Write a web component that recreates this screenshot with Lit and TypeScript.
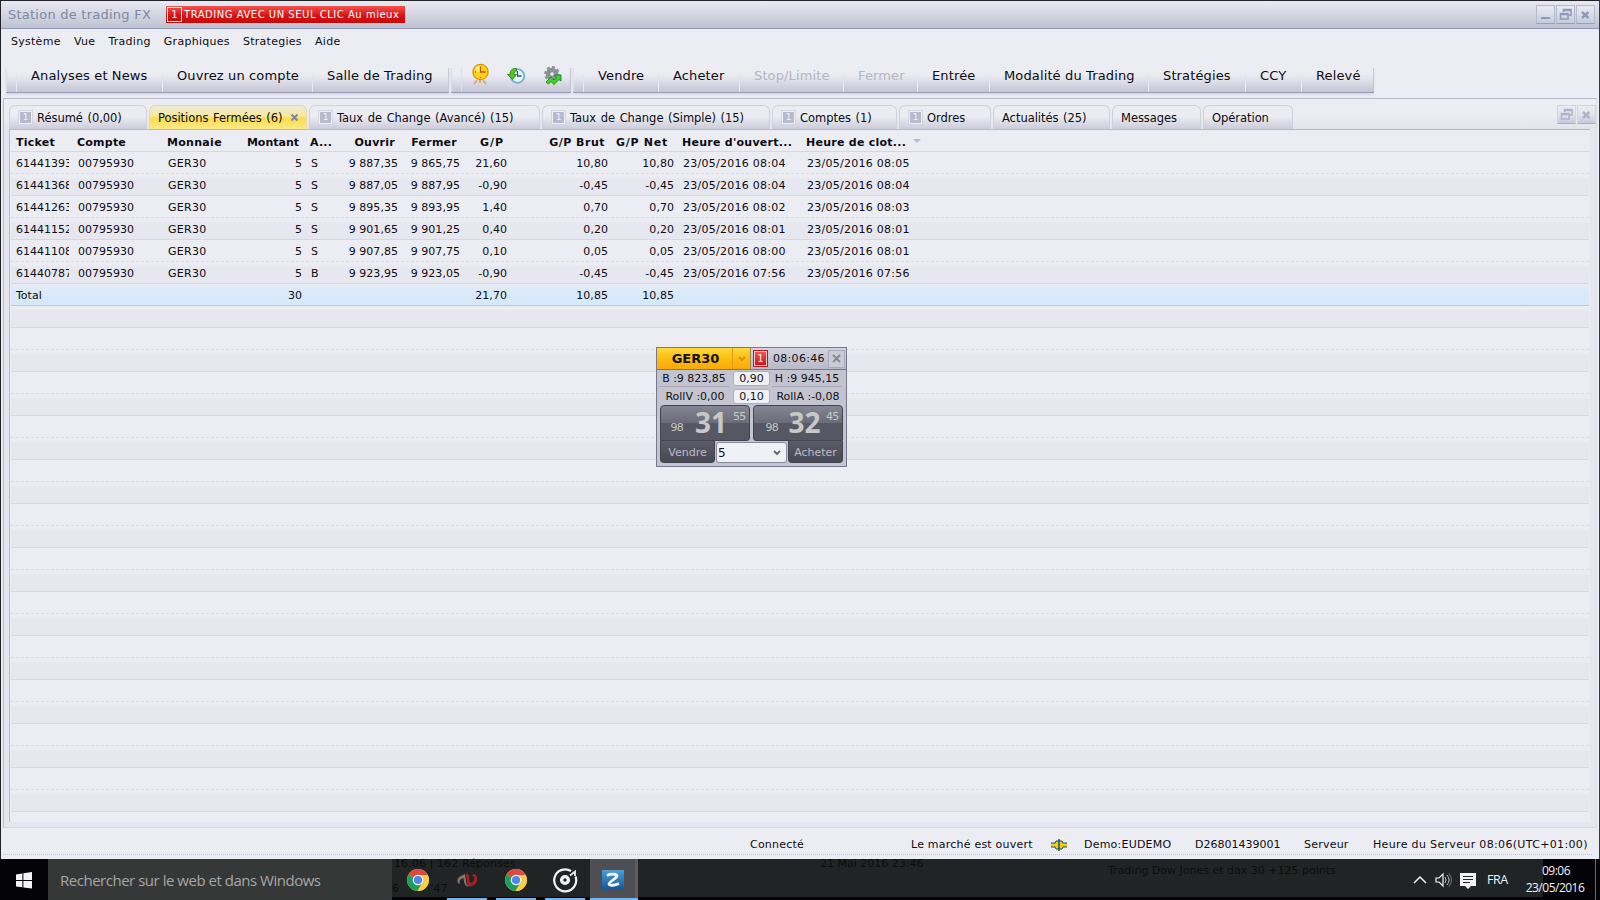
import { LitElement, html, css, svg } from "lit";
import { customElement, property } from "lit/decorators.js";
import { classMap } from "lit/directives/class-map.js";

interface Tab { label: string; width: number; badge?: boolean; active?: boolean; }
interface Tool { label: string; width: number; off?: boolean; }

const MENUS = ["Système", "Vue", "Trading", "Graphiques", "Strategies", "Aide"];

const LINKS: Tool[] = [
  { label: "Analyses et News", width: 146 },
  { label: "Ouvrez un compte", width: 150 },
  { label: "Salle de Trading", width: 137 },
];

const ACTIONS: Tool[] = [
  { label: "Vendre", width: 75 },
  { label: "Acheter", width: 81 },
  { label: "Stop/Limite", width: 104, off: true },
  { label: "Fermer", width: 74, off: true },
  { label: "Entrée", width: 72 },
  { label: "Modalité du Trading", width: 159 },
  { label: "Stratégies", width: 97 },
  { label: "CCY", width: 56 },
  { label: "Relevé", width: 73 },
];

const TABS: Tab[] = [
  { label: "Résumé (0,00)", width: 138, badge: true },
  { label: "Positions Fermées (6)", width: 158, active: true },
  { label: "Taux de Change (Avancé) (15)", width: 231, badge: true },
  { label: "Taux de Change (Simple) (15)", width: 228, badge: true },
  { label: "Comptes (1)", width: 125, badge: true },
  { label: "Ordres", width: 92, badge: true },
  { label: "Actualités (25)", width: 117 },
  { label: "Messages", width: 89 },
  { label: "Opération", width: 90 },
];

const HEAD = ["Ticket", "Compte", "Monnaie", "Montant", "A...", "Ouvrir", "Fermer", "G/P", "G/P Brut", "G/P Net", "Heure d'ouvert...", "Heure de clot..."];
const RIGHT = [3, 5, 6, 7, 8, 9];

const ROWS: string[][] = [
  ["61441393", "00795930", "GER30", "5", "S", "9 887,35", "9 865,75", "21,60", "10,80", "10,80", "23/05/2016 08:04", "23/05/2016 08:05"],
  ["61441368", "00795930", "GER30", "5", "S", "9 887,05", "9 887,95", "-0,90", "-0,45", "-0,45", "23/05/2016 08:04", "23/05/2016 08:04"],
  ["61441263", "00795930", "GER30", "5", "S", "9 895,35", "9 893,95", "1,40", "0,70", "0,70", "23/05/2016 08:02", "23/05/2016 08:03"],
  ["61441152", "00795930", "GER30", "5", "S", "9 901,65", "9 901,25", "0,40", "0,20", "0,20", "23/05/2016 08:01", "23/05/2016 08:01"],
  ["61441108", "00795930", "GER30", "5", "S", "9 907,85", "9 907,75", "0,10", "0,05", "0,05", "23/05/2016 08:00", "23/05/2016 08:01"],
  ["61440787", "00795930", "GER30", "5", "B", "9 923,95", "9 923,05", "-0,90", "-0,45", "-0,45", "23/05/2016 07:56", "23/05/2016 07:56"],
  ["Total", "", "", "30", "", "", "", "21,70", "10,85", "10,85", "", ""],
];
const TOTAL_INDEX = 6;
const ROW_COUNT = 30;

const restoreGlyph = svg`<path d="M7.5 7V4.5H15V10H12.5M7.5 5.5H15" fill="none" stroke="currentColor" stroke-width="1.6"/><path d="M4.5 8.5H12V14H4.5ZM4.5 9.5H12" fill="none" stroke="currentColor" stroke-width="1.6"/>`;
const closeGlyph = svg`<path d="M6 7L12.5 13M12.5 7L6 13" stroke="currentColor" stroke-width="2.4" fill="none"/>`;
const minGlyph = svg`<path d="M5 13H14" stroke="currentColor" stroke-width="2" fill="none"/>`;

@customElement("frame-button")
class FrameButton extends LitElement {
  @property() kind = "close";
  static styles = css`
    :host { display: block; box-sizing: border-box; width: 19px; height: 19px; border: 1px solid #b4bacf; border-bottom-color: #969fc3; color: #8e9bb8;
      background: linear-gradient(#e8e9f1, #dcdee9 45%, #c3cbdd); }
    :host([pale]) { border-color: #d4d5e0; border-bottom-color: #a9adc8; color: #b0b2ca; background: linear-gradient(#ecedf3, #e2e3ec 50%, #c6cadb); }
    svg { display: block; margin: -1px; }
  `;
  render() {
    const glyph = this.kind === "min" ? minGlyph : this.kind === "restore" ? restoreGlyph : closeGlyph;
    return html`<svg width="19" height="19" viewBox="0 0 19 19">${glyph}</svg>`;
  }
}

@customElement("quote-widget")
class QuoteWidget extends LitElement {
  static styles = css`
    :host { display: flex; flex-direction: column; box-sizing: border-box; width: 191px; height: 120px; border: 1px solid #77788c; background: #c3c4d0;
      font: 11px/16px "DejaVu Sans", sans-serif; color: #111; }
    .head { display: flex; height: 22px; box-sizing: border-box; border-bottom: 1px solid #77788c; background: linear-gradient(#d2d3df, #b9bac9); line-height: 22px; }
    .name { width: 76px; font-weight: bold; font-size: 13px; padding-left: 2px; text-align: center; background: linear-gradient(#ffd93a, #fdbd11 50%, #f9a90b); border-right: 1px solid #e09a10; box-sizing: border-box; height: 21px; }
    .drop { width: 18px; background: linear-gradient(#ffd93a, #fdbd11 50%, #f9a90b); height: 21px; border-right: 1px solid #a08a50; box-sizing: border-box; }
    .one { box-sizing: border-box; width: 15px; height: 17px; margin: 2px 0 0 2px; border: 1px solid #c51515; box-shadow: inset 0 0 0 1px #f5c9c9; background: linear-gradient(#f25c55, #cd0d12); color: #fff; line-height: 15px; text-align: center; font-size: 10px; }
    .time { margin-left: 5px; width: 55px; letter-spacing: .3px; }
    .x { box-sizing: border-box; width: 17px; height: 18px; margin-top: 2px; border: 1px solid #a9abbd; background: #cacbd7; }
    svg { display: block; }
    .line { display: grid; grid-template-columns: 76px 37px 1fr; height: 17px; padding-top: 1px; box-sizing: border-box; }
    .line + .line { height: 18px; padding-top: 2px; }
    .line span { text-align: center; line-height: 16px; }
    .line b { font-weight: normal; text-align: center; background: #f0f1f6; border-radius: 3px; height: 15px; line-height: 14px; border: 1px solid #aeb0c0; box-sizing: border-box; }
    .cell { border-bottom: 1px solid #a7a8b8; margin: 0 4px 0 2px; height: 16px; box-sizing: border-box; white-space: nowrap; }
    .prices { display: grid; grid-template-columns: 90px 90px; gap: 3px; padding: 0 3px; }
    .price { height: 36px; box-sizing: border-box; border: 1px solid #444552; border-radius: 4px 4px 3px 0; color: #c8c8c4; display: grid; grid-template-columns: 22px 1fr 16px;
      background: linear-gradient(#858694, #6b6c79 49%, #575865 50%, #565763); }
    .price + .price { border-radius: 4px 4px 0 3px; grid-template-columns: 24px 1fr 16px; }
    .sm { font-size: 11px; line-height: 44px; text-align: right; letter-spacing: -.8px; }
    .big { font: bold 28px/33px "Noto Sans", sans-serif; text-align: center; padding-left: 6px; }
    .price + .price .big { padding-left: 5px; }
    .sup { font-size: 11px; line-height: 21px; letter-spacing: -.8px; }
    .foot { display: flex; padding: 0 3px; }
    .side { width: 55px; height: 22px; box-sizing: border-box; background: linear-gradient(#5a5b67, #474854); border: 1px solid #444552; border-top: 0; border-radius: 0 0 4px 4px; color: #b9bac6; text-align: center; line-height: 23px; }
    .amount { flex: 1; display: flex; justify-content: space-between; box-sizing: border-box; margin: 1px 1px 0; height: 21px; background: #f0f1f6; border: 1px solid #888a9c; border-radius: 3px; font-size: 12px; line-height: 20px; padding: 0 2px 0 1px; }
  `;
  render() {
    return html`
      <div class="head">
        <div class="name">GER30</div>
        <div class="drop"><svg width="17" height="20"><path d="M6 9l3 3 3-3" fill="none" stroke="#df8a12" stroke-width="1.8"/></svg></div>
        <div class="one">1</div><div class="time">08:06:46</div>
        <div class="x"><svg width="15" height="16"><path d="M4 4l7 7M11 4l-7 7" stroke="#85879a" stroke-width="1.8"/></svg></div>
      </div>
      <div class="line"><span class="cell">B :9 823,85</span><b>0,90</b><span class="cell">H :9 945,15</span></div>
      <div class="line"><span>RollV :0,00</span><b>0,10</b><span>RollA :-0,08</span></div>
      <div class="prices">
        <div class="price"><span class="sm">98</span><span class="big">31</span><span class="sup">55</span></div>
        <div class="price"><span class="sm">98</span><span class="big">32</span><span class="sup">45</span></div>
      </div>
      <div class="foot">
        <div class="side">Vendre</div>
        <div class="amount">5<svg width="14" height="18"><path d="M4 8l3 3 3-3" fill="none" stroke="#62647a" stroke-width="1.8"/></svg></div>
        <div class="side">Acheter</div>
      </div>`;
  }
}

@customElement("app-root")
class AppRoot extends LitElement {
  static styles = css`
    :host { display: flex; flex-direction: column; position: relative; width: 1600px; height: 900px; overflow: hidden; background: #ecedf3; color: #0c0c12;
      font: 11px/16px "DejaVu Sans", sans-serif; white-space: nowrap; }
    svg { display: block; }
    .window { box-sizing: border-box; height: 859px; flex: none; border: 1px solid #232228; border-bottom: 0; border-right-color: #3a3944; display: flex; flex-direction: column; }
    .title { box-sizing: border-box; height: 28px; border-bottom: 1px solid #9297b8; background: linear-gradient(#e9e9f2, #d6d8e3 45%, #bfc2d4); display: flex; align-items: center; padding: 0 4px 0 7px; }
    .caption { font-size: 13px; color: #7d89a6; width: 158px; letter-spacing: .24px; }
    .alert { display: flex; align-items: center; width: 239px; height: 17px; background: linear-gradient(#f4524c, #d91514 55%, #c80808); color: #fff; font-size: 10px; letter-spacing: .52px; }
    .alert i { box-sizing: border-box; width: 15px; height: 15px; border: 1px solid #fff; font-style: normal; text-align: center; line-height: 14px; margin: 0 2px 0 1px; letter-spacing: 0; }
    .frames { margin-left: auto; display: flex; gap: 1px; }
    .menu { display: flex; gap: 13.2px; padding: 5px 0 0 10px; height: 39px; box-sizing: border-box; letter-spacing: .27px; }
    .tools { display: flex; gap: 2px; padding-left: 5px; height: 27px; }
    .group { display: flex; height: 24px; border-bottom: 1.5px solid #9a98b8; box-shadow: 0 2px 2px #dadae6; background: linear-gradient(#ecedf3 25%, #dddee8 55%, #c5c6d5); }
    .group:first-child, .group:last-child { box-shadow: 0 2px 2px #dadae6, inset -1px 0 0 #c8c9d8; }
    .grip { width: 10px; box-sizing: border-box; border-left: 1px solid #dcdce6; }
    .tool { box-sizing: border-box; padding-left: 14px; font-size: 13px; line-height: 15px; letter-spacing: .13px; border-left: 1px solid transparent; border-image: linear-gradient(#ecedf3 20%, #dfe0ea 40%, #eeeff5 70%, #e4e4ee) 1; border-right: 0; border-top: 0; border-bottom: 0; }
    .tool.off { color: #b4b5c4; }
    .icons { width: 110px; box-sizing: border-box; padding-left: 8px; display: flex; border-left: 1px solid #dfe0ea; border-right: 1px solid #c4c5d5; }
    .icons svg { margin-top: -6px; overflow: visible; }
    .panel { margin: 3px 2px 0; height: 730px; box-sizing: border-box; border: 1px solid #b8b9cc; border-right-color: #dedfe9; border-bottom-color: #d5d6e3; padding: 6px 6px 5px 5px; background: #e5e6ef; display: flex; flex-direction: column; }
    .strip { display: flex; height: 24px; margin: -6px -6px 0 -5px; padding: 6px 0 0 5px; background: linear-gradient(#ecedf3 60%, #e2e3ec); }
    .tabs { display: flex; gap: 2px; flex: 1; }
    .tab { box-sizing: border-box; height: 24px; border: 1px solid #cfd0dd; border-bottom: 0; border-radius: 6px 6px 0 0; background: linear-gradient(#ecedf3 45%, #dfe0e9 65%, #cccddb); display: flex; align-items: center; padding: 0 8px; font-size: 11.5px; letter-spacing: -.04px; word-spacing: 1px; }
    .tab.active { padding: 0 7px 0 8px; justify-content: space-between; border-color: #e3d9a2; background: linear-gradient(#eeeada, #f6e89a 45%, #fbdc50 52%, #fde987); }
    .one { box-sizing: border-box; width: 15px; height: 15px; margin-right: 4px; border: 1px solid #d4d5e0; box-shadow: inset 0 0 0 1px #eeeef4; background: #b9bacd; color: #f2f2f7; font-size: 9px; line-height: 13px; text-align: center; letter-spacing: 0; }
    .grid { flex: 1; display: flex; flex-direction: column; box-sizing: border-box; border: 1px solid #b8b9cc; border-right: 0; border-bottom: 0; padding-left: 1px; background: #ecedf3; }
    .row { box-sizing: border-box; height: 22px; flex: none; margin-right: 1px; display: grid; line-height: 23px; grid-template-columns: 58px 93px 78px 66px 34px 62px 62px 47px 101px 65px 124px 130px; border-bottom: 1px dashed #dadbe5; }
    .row.even { background: linear-gradient(#ecedf3 3px, #e7e7ef 5px); border-bottom: 1px solid #d6d7e2; }
    .row.sum { background: linear-gradient(#e6ebf4, #d8e9f9 50%, #d5e8fa); border-bottom: 1px solid #b5cbe0; }
    .row.head { font-weight: bold; border-bottom: 1px solid #d6d7e2; line-height: 25px; letter-spacing: .23px; }
    .row span { overflow: hidden; height: 21px; padding-left: 6px; }
    .row span:nth-child(1) { padding-left: 5px; }
    .row span:nth-child(2) { padding-left: 9px; }
    .row span:nth-child(3) { letter-spacing: .3px; }
    .row span:nth-child(5) { padding-left: 5px; }
    .row span:nth-child(n + 11) { letter-spacing: .26px; }
    .row span.num { text-align: right; padding: 0 4px 0 0; letter-spacing: .04px; }
    .row span.num:nth-child(10) { padding-right: 3px; }
    .row.head span { padding-left: 5px; }
    .row.head span:nth-child(2) { padding-left: 8px; }
    .row.head span:nth-child(5) { padding-left: 4px; }
    .row.head span.num { padding: 0 7px 0 0; letter-spacing: .25px; }
    .row.head span.num:nth-child(4) { letter-spacing: 0; }
    .row.head span.num:nth-child(8) { padding-right: 7px; letter-spacing: 1px; }
    .row.head span.num:nth-child(9) { letter-spacing: .5px; }
    .row.head span.num:nth-child(10) { padding-right: 9px; letter-spacing: .75px; }
    .arrow { display: inline-block; margin-left: 7px; border: 4px solid transparent; border-top: 4px solid #b9bacb; border-bottom: 0; vertical-align: 3px; }
    .status { box-sizing: border-box; height: 27px; margin: 0 7px 0 2px; border-bottom: 1px dotted #c9c8c8; display: grid; align-items: center; padding-top: 7px; letter-spacing: .22px;
      grid-template-columns: 747px 161px 140px 33px 111px 109px 69px 1fr; }
    .status .id { letter-spacing: 0; }
    .status .server { letter-spacing: .34px; }
    .float { position: absolute; left: 656px; top: 347px; }
    .taskbar { position: relative; height: 41px; flex: none; display: flex; background: linear-gradient(#212424 38px, #050507 38px); font-family: "Open Sans", sans-serif; }
    .start { width: 48px; height: 41px; background: #030308; padding: 13px 0 0 16px; box-sizing: border-box; }
    .search { width: 344px; height: 41px; background: #363838; color: #a5a6a6; font-size: 15px; line-height: 42px; padding-left: 12px; box-sizing: border-box; letter-spacing: -.48px; }
    .app { width: 49px; height: 41px; display: grid; place-items: center; box-sizing: border-box; padding-left: 3px; position: relative; }
    .app.run::after { content: ""; position: absolute; left: 6px; bottom: 0; width: 40px; height: 2px; background: #75b5ea; }
    .app.cur { background: #4e4e53; padding: 0; width: 48px; margin-left: 2px; box-sizing: border-box; border-right: 3px solid #5d5d62; }
    .app.cur::after { left: 0; width: 48px; }
    .tray { margin-left: auto; display: flex; align-items: center; color: #f2f2f4; height: 41px; font-size: 12px; }
    .lang { margin: 0 0 0 11px; width: 25px; letter-spacing: -.4px; font-size: 12.5px; }
    .clock { width: 88px; height: 41px; background: linear-gradient(90deg, transparent 31px, #030308 31px 83px, #6a6a70 83px 84px, #030308 84px); line-height: 17px; padding-top: 3px; box-sizing: border-box; font-size: 12px; letter-spacing: -.5px; display: flex; flex-direction: column; align-items: center; }
    .clock div:nth-child(2) { margin-left: -2px; }
    .ghost { position: absolute; color: #0b0d0d; font-size: 11px; line-height: 14px; height: 14px; font-family: "DejaVu Sans", sans-serif; }
    .g1 { left: 394px; top: -2px; letter-spacing: .1px; } .g2 { left: 820px; top: -2px; } .g3 { left: 1108px; top: 5px; } .g4 { left: 392px; top: 23px; }
  `;

  private tool(t: Tool) {
    return html`<div class=${classMap({ tool: true, off: !!t.off })} style="width:${t.width}px">${t.label}</div>`;
  }

  private chrome() {
    return svg`<svg width="22" height="22" viewBox="0 0 22 22"><circle cx="11" cy="11" r="11" fill="#f8ce46"/><path d="M11 11L1.5 5.5A11 11 0 0 1 20.5 5.5Z" fill="#dc4a3d"/><path d="M1.5 5.5A11 11 0 0 0 10.5 22L15.5 13.5L11 11Z" fill="#1f9e5a"/><path d="M11 6H20.7A11 11 0 0 1 10.5 22L15.5 13.5Z" fill="#f8ce46"/><circle cx="11" cy="11" r="5.3" fill="#f4f4f4"/><circle cx="11" cy="11" r="4.1" fill="#4a87ee"/></svg>`;
  }

  render() {
    return html`
      <div class="window">
        <div class="title">
          <span class="caption">Station de trading FX</span>
          <div class="alert"><i>1</i><span>TRADING AVEC UN SEUL CLIC Au mieux</span></div>
          <div class="frames"><frame-button kind="min"></frame-button><frame-button kind="restore"></frame-button><frame-button></frame-button></div>
        </div>
        <div class="menu">${MENUS.map((m) => html`<span>${m}</span>`)}</div>
        <div class="tools">
          <div class="group"><div class="grip"></div>${LINKS.map((t) => this.tool(t))}</div>
          <div class="group"><div class="grip"></div>
            <div class="icons">
              <svg width="36" height="26"><path d="M7 18L4 22M13 18L16 22M10 17V21" stroke="#d8a080" stroke-width="1.6"/><circle cx="10.500" cy="10" r="7.6" fill="#ffd21c" stroke="#e0940c" stroke-width="1.4"/><circle cx="8.500" cy="7" r="3" fill="#fff07a"/><path d="M10.500 4.500V10H15.500M5 10h1M10.500 15v1" stroke="#b5581c" stroke-width="1.3" fill="none"/></svg>
              <svg width="36" height="26"><circle cx="11.500" cy="14" r="6.800" fill="#e6f3fa" stroke="#6fb4d0" stroke-width="1.800"/><path d="M11.500 9V14H15.500" stroke="#3d5a6c" stroke-width="1.300" fill="none"/><path d="M10.500 6.500C6 6 4 8.500 4 12.500H1.500L6.500 17.500L10.500 12.500H8C8 10.500 8.500 9.500 10.500 9Z" fill="#58c421" stroke="#2d7d12" stroke-width=".8"/></svg>
              <svg width="26" height="26"><circle cx="10" cy="12" r="4" fill="none" stroke="#8b9196" stroke-width="4.500"/><circle cx="10" cy="12" r="6.800" fill="none" stroke="#8d9398" stroke-width="2.200" stroke-dasharray="3 2.300"/><path d="M4 20L9 15L12 18L15 15.500L12.500 13H19V19L17 17.500L12 22.500L9 19.500L6.500 22Z" fill="#3ed42b" stroke="#178a16" stroke-width=".9"/></svg>
            </div>
          </div>
          <div class="group"><div class="grip"></div>${ACTIONS.map((t) => this.tool(t))}</div>
        </div>
        <div class="panel">
          <div class="strip">
            <div class="tabs">${TABS.map((t) => html`
              <div class=${classMap({ tab: true, active: !!t.active })} style="width:${t.width}px">
                ${t.badge ? html`<span class="one">1</span>` : ""}<span>${t.label}</span>
                ${t.active ? svg`<svg width="9" height="9"><path d="M1.500 1.500L7.500 7.500M7.500 1.500L1.500 7.500" stroke="#85859a" stroke-width="2"/></svg>` : ""}
              </div>`)}</div>
            <div class="frames"><frame-button pale kind="restore"></frame-button><frame-button pale></frame-button></div>
          </div>
          <div class="grid">
            <div class="row head">${HEAD.map((h, i) => html`<span class=${classMap({ num: RIGHT.includes(i) })}>${h}${i === 11 ? html`<i class="arrow"></i>` : ""}</span>`)}</div>
            ${Array.from({ length: ROW_COUNT }, (_, r) => html`
              <div class=${classMap({ row: true, even: r % 2 === 1, sum: r === TOTAL_INDEX })}>
                ${(ROWS[r] ?? []).map((c, i) => html`<span class=${classMap({ num: RIGHT.includes(i) })}>${c}</span>`)}
              </div>`)}
          </div>
        </div>
        <div class="status">
          <span></span><span>Connecté</span><span>Le marché est ouvert</span>
          <svg width="16" height="12"><path d="M0 6H16" stroke="#1d4f72" stroke-width="5"/><path d="M3 6L5 2H11L13 6L11 10H5Z" fill="#f6cd12" stroke="#1d4f72"/><path d="M0 6H16" stroke="#f6cd12" stroke-width="3"/><path d="M8 0V12" stroke="#1d4f72" stroke-width="1.500"/></svg>
          <span>Demo:EUDEMO</span><span class="id">D26801439001</span><span>Serveur</span><span class="server">Heure du Serveur 08:06(UTC+01:00)</span>
        </div>
      </div>
      <quote-widget class="float"></quote-widget>
      <div class="taskbar">
        <span class="ghost g1">16.06 | 162 Réponses</span><span class="ghost g2">21 Mai 2016 23:46</span><span class="ghost g3">Trading Dow Jones et dax 30 +125 points</span><span class="ghost g4">6 &nbsp; &nbsp; &nbsp; &nbsp; '47</span>
        <div class="start"><svg width="17" height="17"><path d="M0 2.400L6.400 1.500V8H0ZM7.400 1.300L16 0V8H7.400ZM0 9H6.400V15.300L0 14.400ZM7.400 9H16V16.500L7.400 15.400Z" fill="#f4f4f6"/></svg></div>
        <div class="search">Rechercher sur le web et dans Windows</div>
        <div class="app">${this.chrome()}</div>
        <div class="app run"><svg width="22" height="18" viewBox="0 0 22 18"><path d="M4 13C0 12 1 7 4 5.500L9 3L10.500 13L13 15.500C9 16 8 12 7.500 7C4 8 3 10 4 13Z" fill="#8a7468"/><path d="M10 2.500C14 3 13 6 13.500 10C14 13 17 12 18 9C19 6 18 5 15.500 5L18 2.500C22 5 22 10 19.500 13C16 17 11 16 11 11Z" fill="#a32226"/></svg></div>
        <div class="app run">${this.chrome()}</div>
        <div class="app run"><svg width="26" height="26" viewBox="0 0 26 26"><path d="M19 4A11 11 0 1 0 23.500 9.500" fill="none" stroke="#f2f2f4" stroke-width="2.200"/><circle cx="13" cy="13" r="3.400" fill="none" stroke="#f2f2f4" stroke-width="3.400"/><path d="M18 8.500L23 4.500V9" fill="none" stroke="#f2f2f4" stroke-width="1.800"/></svg></div>
        <div class="app run cur"><svg width="22" height="20" viewBox="0 0 22 20"><defs><linearGradient id="z" x2="0" y2="1"><stop stop-color="#4c9fd6"/><stop offset="1" stop-color="#14559c"/></linearGradient></defs><rect width="22" height="20" fill="url(#z)"/><path d="M5 5.500C9 3.500 15 4 15 6C15 8 7 12 7 14C7.500 16 13 15.500 17 13.500" fill="none" stroke="#f4f6fa" stroke-width="2.800"/></svg></div>
        <div class="tray">
          <svg width="64" height="30" viewBox="1412 0 64 30"><path d="M1414 18l6-6 6 6" fill="none" stroke="#f2f2f4" stroke-width="1.500"/><path d="M1436 13h3l4-4v12l-4-4h-3z" fill="none" stroke="#f2f2f4" stroke-width="1.200"/><path d="M1445 12q2 3 0 6M1447 10q4 5 0 10" fill="none" stroke="#c0c0c2"/><path d="M1449 8.500q5 6.500 0 13" fill="none" stroke="#77787a"/><path d="M1460 8h16v13h-5l-3 3-3-3h-5z" fill="#f2f2f4"/><path d="M1463 11.500h10M1463 14.500h10M1463 17.500h7" stroke="#212424"/></svg>
          <span class="lang">FRA</span>
          <div class="clock"><div>09:06</div><div>23/05/2016</div></div>
        </div>
      </div>`;
  }
}
